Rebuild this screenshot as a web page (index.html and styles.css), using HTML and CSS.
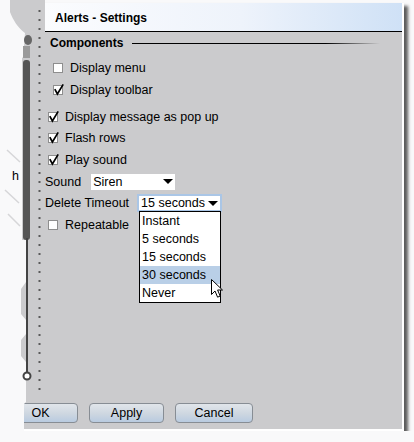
FILE: index.html
```html
<!DOCTYPE html>
<html lang="en">
<head>
  <meta charset="UTF-8" />
  <title>Alerts - Settings</title>
  <link rel="stylesheet" href="styles.css">
</head>
<body>

  <div class="dialog">
    <div class="titlebar">Alerts - Settings</div>

    <div class="content">
      <div class="head"><span>Components</span><span class="rule"></span></div>

      <div class="list1">
        <div class="row">
          <svg class="cb" viewBox="0 0 10 10"><rect x="0.5" y="0.5" width="9" height="9" fill="#fff" stroke="#8e8e8e"/></svg>
          Display menu
        </div>
        <div class="row">
          <svg class="cb" viewBox="0 0 10 10"><rect x="0.5" y="0.5" width="9" height="9" fill="#fff" stroke="#8e8e8e"/><path d="M1.8 4.2 L4.4 9 L10.2 -0.6" fill="none" stroke="#000" stroke-width="1.7"/></svg>
          Display toolbar
        </div>
      </div>

      <div class="list2">
        <div class="row">
          <svg class="cb" viewBox="0 0 10 10"><rect x="0.5" y="0.5" width="9" height="9" fill="#fff" stroke="#8e8e8e"/><path d="M1.8 4.2 L4.4 9 L10.2 -0.6" fill="none" stroke="#000" stroke-width="1.7"/></svg>
          Display message as pop up
        </div>
        <div class="row">
          <svg class="cb" viewBox="0 0 10 10"><rect x="0.5" y="0.5" width="9" height="9" fill="#fff" stroke="#8e8e8e"/><path d="M1.8 4.2 L4.4 9 L10.2 -0.6" fill="none" stroke="#000" stroke-width="1.7"/></svg>
          Flash rows
        </div>
        <div class="row">
          <svg class="cb" viewBox="0 0 10 10"><rect x="0.5" y="0.5" width="9" height="9" fill="#fff" stroke="#8e8e8e"/><path d="M1.8 4.2 L4.4 9 L10.2 -0.6" fill="none" stroke="#000" stroke-width="1.7"/></svg>
          Play sound
        </div>
        <div class="row field">
          <span class="label">Sound</span>
          <div class="combo">Siren<i class="arrow"></i></div>
        </div>
        <div class="row field">
          <span class="label">Delete Timeout</span>
          <div class="combo focused">15 seconds<i class="arrow"></i>
            <ul class="popup">
              <li>Instant</li>
              <li>5 seconds</li>
              <li>15 seconds</li>
              <li class="hover">30 seconds</li>
              <li>Never</li>
              <svg class="cursor" width="13" height="20" viewBox="0 0 13 20"><path d="M0.5 0.5 V15.5 L4 12 L6.6 18.2 L9.2 17 L6.6 11 H11.5 Z" fill="#fff" stroke="#000" stroke-width="1"/></svg>
            </ul>
          </div>
        </div>
        <div class="row">
          <svg class="cb" viewBox="0 0 10 10"><rect x="0.5" y="0.5" width="9" height="9" fill="#fff" stroke="#8e8e8e"/></svg>
          Repeatable
        </div>
      </div>
    </div>

    <div class="buttons">
      <button class="ok">OK</button>
      <button class="apply">Apply</button>
      <button class="cancel">Cancel</button>
    </div>
  </div>

  <!-- torn edge of the cropped screenshot -->
  <svg class="torn" width="45" height="442" viewBox="0 0 45 442">
    <rect x="10" y="0" width="35" height="3" fill="#cbcbcd"/>
    <path d="M0 0 H10 V12 C13 20 18 28 25 33 L24 46 L27 54 L22 58 V240 H26 V282 L21 289 V314 L26 320 V334 L21 340 V356 L26 362 V402 L24 404 V442 H0 Z" fill="#f9f9fa"/>
    <g stroke="#d6d6d8" stroke-width="1.5" fill="none">
      <path d="M7 150 L20 162"/>
      <path d="M5 190 L19 203"/>
      <path d="M8 214 L20 226"/>
    </g>
    <ellipse cx="28" cy="40" rx="4" ry="5" fill="#666"/>
    <rect x="23" y="46" width="7" height="12" fill="#9a9a9a"/>
    <rect x="23" y="60" width="7" height="180" rx="3" fill="#555"/>
    <rect x="26" y="238" width="2" height="134" fill="#444"/>
    <circle cx="27" cy="376" r="3.5" fill="#fff" stroke="#444" stroke-width="2"/>
    <text x="12" y="180" class="stray">h</text>
    <line x1="39.5" y1="10" x2="39.5" y2="392" stroke="#5a5a5a" stroke-width="2" stroke-dasharray="2 7"/>
  </svg>

</body>
</html>
```

FILE: styles.css
```css
html, body {
  margin: 0;
  background: #f9f9fa;
  font-family: "Liberation Sans", Arial, sans-serif;
  font-size: 12.5px;
  color: #000;
}
.dialog {
  display: flex;
  flex-direction: column;
  width: 402px;
  height: 426px;
  margin-top: 3px;
  background: #cbcbcd;
  border-right: 2px solid #fff;
  border-bottom: 2px solid #fff;
  box-shadow: 4px 3px 3px rgba(40,40,40,0.75);
}
.titlebar {
  margin-left: 45px;
  height: 26px;
  padding: 2px 0 0 10px;
  border-bottom: 1px solid #000;
  display: flex;
  align-items: center;
  font-size: 12px;
  font-weight: bold;
  background: linear-gradient(to right, #fbfcfe 0%, #eef3fb 55%, #cfe1f6 100%);
}
.content {
  padding-left: 45px;
}
.head {
  height: 22px;
  margin-left: 5px;
  display: flex;
  align-items: center;
  font-size: 12px;
  font-weight: bold;
}
.head .rule {
  flex: 1;
  height: 1px;
  margin: 0 22px 0 9px;
  background: linear-gradient(to right, #000 78%, rgba(0,0,0,0));
}
.row {
  display: flex;
  align-items: center;
  white-space: nowrap;
}
.list1 {
  margin-top: 3px;
}
.list1 .row {
  height: 22px;
  padding-left: 8px;
}
.list2 {
  margin-top: 5px;
}
.list2 .row {
  height: 21.6px;
  padding-left: 3px;
}
.list2 .row.field {
  padding-left: 0;
}
.cb {
  width: 10px;
  height: 10px;
  margin-right: 7px;
  flex: none;
  overflow: visible;
}
.label {
  margin-right: 10px;
}
.combo {
  position: relative;
  box-sizing: border-box;
  width: 84px;
  height: 16px;
  padding-left: 2px;
  display: flex;
  align-items: center;
  justify-content: space-between;
  background: #fff;
}
.combo.focused {
  width: 85px;
  height: 18px;
  margin-left: -2px;
  border: 2px solid #aac6e6;
  padding-left: 2px;
}
.arrow {
  width: 0;
  height: 0;
  margin-right: 2px;
  border-left: 5px solid transparent;
  border-right: 5px solid transparent;
  border-top: 5px solid #000;
}
.popup {
  position: absolute;
  top: calc(100% + 1px);
  left: 0;
  box-sizing: border-box;
  width: 82px;
  margin: 0;
  padding: 0;
  list-style: none;
  background: #fff;
  border: 1px solid #000;
  z-index: 10;
}
.popup li {
  height: 18px;
  line-height: 18px;
  padding-left: 2px;
}
.popup li.hover {
  background: #b9cfe7;
}
.cursor {
  position: absolute;
  left: 71px;
  top: 67px;
}
.buttons {
  margin-top: auto;
  padding: 0 0 6px 3px;
  display: flex;
  gap: 11px;
}
.buttons button {
  box-sizing: border-box;
  width: 75px;
  height: 20px;
  padding: 0;
  font-family: inherit;
  font-size: 12.5px;
  color: #000;
  border: 1px solid #878d94;
  border-radius: 4px;
  background: linear-gradient(#e1e5ea, #cdd6e0 55%, #b9cbe0);
}
.buttons .cancel {
  width: 78px;
}
.torn {
  position: absolute;
  left: 0;
  top: 0;
  pointer-events: none;
}
.stray {
  font-family: "Liberation Sans", Arial, sans-serif;
  font-size: 12.5px;
  fill: #000;
}
```
